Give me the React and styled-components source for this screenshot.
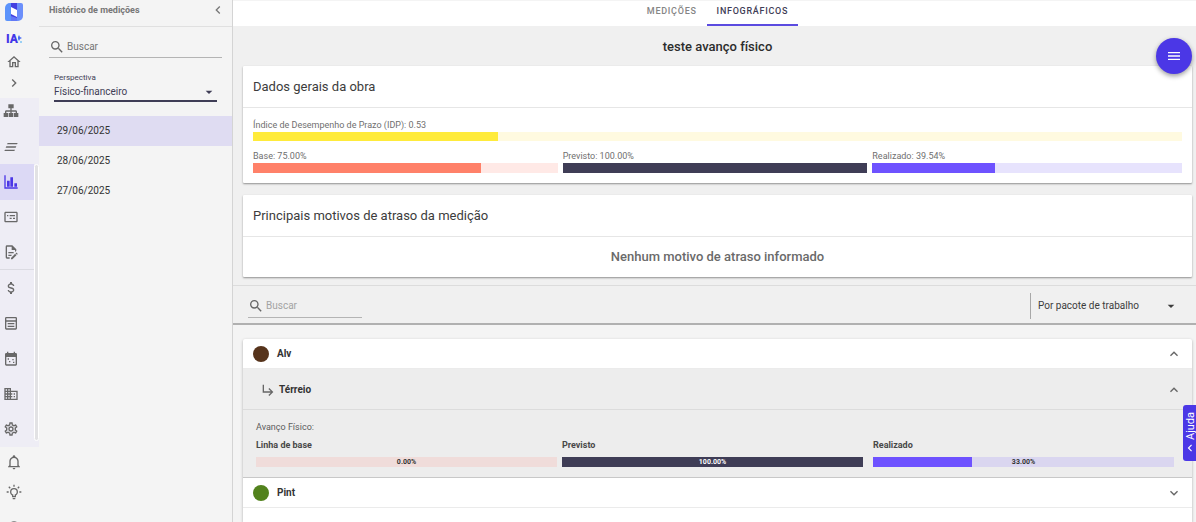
import { useState } from "react";
import styled, { createGlobalStyle, css } from "styled-components";

const GlobalStyle = createGlobalStyle`
  * {
    box-sizing: border-box;
  }
  body {
    margin: 0;
    font-family: Roboto, "Liberation Sans", sans-serif;
    color: #333;
    background: #f4f4f4;
    overflow: hidden;
  }
  button, input, select {
    font-family: inherit;
    color: inherit;
    border: 0;
    border-radius: 0;
    background: none;
    padding: 0;
    margin: 0;
    outline: none;
  }
  button, select {
    cursor: pointer;
  }
  a {
    color: inherit;
    text-decoration: none;
  }
  h1, h2, p {
    margin: 0;
  }
`;

const icons = {
  home: "M12 5.69L17 10.19V18H15V12H9V18H7V10.19L12 5.69M12 3L2 12H5V20H11V14H13V20H19V12H22",
  right: "M8.59,16.58L13.17,12L8.59,7.41L10,6L16,12L10,18L8.59,16.58Z",
  left: "M15.41,16.58L10.83,12L15.41,7.41L14,6L8,12L14,18L15.41,16.58Z",
  up: "M7.41,15.41L12,10.83L16.59,15.41L18,14L12,8L6,14L7.41,15.41Z",
  down: "M7.41,8.58L12,13.17L16.59,8.58L18,10L12,16L6,10L7.41,8.58Z",
  menuDown: "M7,10L12,15L17,10H7Z",
  search:
    "M9.5,3A6.5,6.5 0 0,1 16,9.5C16,11.11 15.41,12.59 14.44,13.73L14.71,14H15.5L20.5,19L19,20.5L14,15.5V14.71L13.73,14.44C12.59,15.41 11.11,16 9.5,16A6.5,6.5 0 0,1 3,9.5A6.5,6.5 0 0,1 9.5,3M9.5,5C7,5 5,7 5,9.5C5,12 7,14 9.5,14C12,14 14,12 14,9.5C14,7 12,5 9.5,5Z",
  menu: "M3,6H21V8H3V6M3,11H21V13H3V11M3,16H21V18H3V16Z",
  sitemap:
    "M8,2V8H11V11H5C3.89,11 3,11.89 3,13V15H1V21H8V15H5V13H11V15H9V21H15V15H13V13H19V15H16V21H23V15H21V13C21,11.89 20.11,11 19,11H13V8H16V2H8Z",
  lines: "M7,6H22L21,8H6L7,6M5,11H20L19,13H4L5,11M3,16H18L17,18H2L3,16Z",
  chart: "M2,2H4V20H22V22H2V2M6,10H10V19H6V10M11,5H15V19H11V5M17,14H21V19H17V14Z",
  card: "M20,4H4C2.89,4 2,4.89 2,6V18C2,19.11 2.89,20 4,20H20C21.11,20 22,19.11 22,18V6C22,4.89 21.11,4 20,4M20,18H4V6H20V18M6,9H8V11H6V9M10,9H18V11H10V9M10,13H13V15H10V13M15,13H18V15H15V13Z",
  fileEdit:
    "M8,12H16V14H8V12M10,20H6V4H13V9H18V12.1L20,10.1V8L14,2H6A2,2 0 0,0 4,4V20A2,2 0 0,0 6,22H10V20M8,18H12.1L13,17.1V16H8V18M20.2,13C20.3,13 20.5,13.1 20.6,13.2L21.9,14.5C22.1,14.7 22.1,15.1 21.9,15.3L20.9,16.3L18.8,14.2L19.8,13.2C19.9,13.1 20,13 20.2,13M20.2,16.9L14.1,23H12V20.9L18.1,14.8L20.2,16.9Z",
  dollar:
    "M7,15H9C9,16.08 10.37,17 12,17C13.63,17 15,16.08 15,15C15,13.9 13.96,13.5 11.76,12.97C9.64,12.44 7,11.78 7,9C7,7.21 8.47,5.69 10.5,5.18V3H13.5V5.18C15.53,5.69 17,7.21 17,9H15C15,7.92 13.63,7 12,7C10.37,7 9,7.92 9,9C9,10.1 10.04,10.5 12.24,11.03C14.36,11.56 17,12.22 17,15C17,16.79 15.53,18.31 13.5,18.82V21H10.5V18.82C8.47,18.31 7,16.79 7,15Z",
  form: "M5,3H19A2,2 0 0,1 21,5V20A2,2 0 0,1 19,22H5A2,2 0 0,1 3,20V5A2,2 0 0,1 5,3M5,5V8H19V5H5M5,10V20H19V10H5M7,12H17V14H7V12M7,16H17V18H7V16Z",
  calendar:
    "M6,1H8V3H16V1H18V3H19A2,2 0 0,1 21,5V20A2,2 0 0,1 19,22H5A2,2 0 0,1 3,20V5A2,2 0 0,1 5,3H6V1M5,9V20H19V9H5M7,11H9V13H7V11M14,12H16V14H14V12M9,15H11V17H9V15M15,16H17V18H15V16Z",
  building:
    "M18,15H16V17H18M18,11H16V13H18M20,19H12V17H14V15H12V13H14V11H12V9H20M10,7H8V5H10M10,11H8V9H10M10,15H8V13H10M10,19H8V17H10M6,7H4V5H6M6,11H4V9H6M6,15H4V13H6M6,19H4V17H6M12,7V3H2V21H22V7H12Z",
  cog: "M12,8A4,4 0 0,1 16,12A4,4 0 0,1 12,16A4,4 0 0,1 8,12A4,4 0 0,1 12,8M12,10A2,2 0 0,0 10,12A2,2 0 0,0 12,14A2,2 0 0,0 14,12A2,2 0 0,0 12,10M10,22C9.75,22 9.54,21.82 9.5,21.58L9.13,18.93C8.5,18.68 7.96,18.34 7.44,17.94L4.95,18.95C4.73,19.03 4.46,18.95 4.34,18.73L2.34,15.27C2.21,15.05 2.27,14.78 2.46,14.63L4.57,12.97L4.5,12L4.57,11L2.46,9.37C2.27,9.22 2.21,8.95 2.34,8.73L4.34,5.27C4.46,5.05 4.73,4.96 4.95,5.05L7.44,6.05C7.96,5.66 8.5,5.32 9.13,5.07L9.5,2.42C9.54,2.18 9.75,2 10,2H14C14.25,2 14.46,2.18 14.5,2.42L14.87,5.07C15.5,5.32 16.04,5.66 16.56,6.05L19.05,5.05C19.27,4.96 19.54,5.05 19.66,5.27L21.66,8.73C21.79,8.95 21.73,9.22 21.54,9.37L19.43,11L19.5,12L19.43,13L21.54,14.63C21.73,14.78 21.79,15.05 21.66,15.27L19.66,18.73C19.54,18.95 19.27,19.04 19.05,18.95L16.56,17.95C16.04,18.34 15.5,18.68 14.87,18.93L14.5,21.58C14.46,21.82 14.25,22 14,22H10M11.25,4L10.88,6.61C9.68,6.86 8.62,7.5 7.85,8.39L5.44,7.35L4.69,8.65L6.8,10.2C6.4,11.37 6.4,12.64 6.8,13.8L4.68,15.36L5.43,16.66L7.86,15.62C8.63,16.5 9.68,17.14 10.87,17.38L11.24,20H12.76L13.13,17.39C14.32,17.14 15.37,16.5 16.14,15.62L18.57,16.66L19.32,15.36L17.2,13.81C17.6,12.64 17.6,11.37 17.2,10.2L19.31,8.65L18.56,7.35L16.15,8.39C15.38,7.5 14.32,6.86 13.12,6.62L12.75,4H11.25Z",
  bell: "M10 21H14C14 22.1 13.1 23 12 23S10 22.1 10 21M21 19V20H3V19L5 17V11C5 7.9 7 5.2 10 4.3V4C10 2.9 10.9 2 12 2S14 2.9 14 4V4.3C17 5.2 19 7.9 19 11V17L21 19M17 11C17 8.2 14.8 6 12 6S7 8.2 7 11V18H17V11Z",
  bulb: "M20,11H23V13H20V11M1,11H4V13H1V11M13,1V4H11V1H13M4.92,3.5L7.05,5.64L5.63,7.05L3.5,4.93L4.92,3.5M16.95,5.63L19.07,3.5L20.5,4.93L18.37,7.05L16.95,5.63M12,6A6,6 0 0,1 18,12C18,14.22 16.79,16.16 15,17.2V19A1,1 0 0,1 14,20H10A1,1 0 0,1 9,19V17.2C7.21,16.16 6,14.22 6,12A6,6 0 0,1 12,6M14,21V22A1,1 0 0,1 13,23H11A1,1 0 0,1 10,22V21H14M11,18H13V15.87C14.73,15.43 16,13.86 16,12A4,4 0 0,0 12,8A4,4 0 0,0 8,12C8,13.86 9.27,15.43 11,15.87V18Z",
  help: "M12,2A10,10 0 0,0 2,12A10,10 0 0,0 12,22A10,10 0 0,0 22,12A10,10 0 0,0 12,2M12,20A8,8 0 0,1 4,12A8,8 0 0,1 12,4A8,8 0 0,1 20,12A8,8 0 0,1 12,20M11,16H13V18H11V16Z",
  subArrow:
    "M20,15L14,21L12.58,19.58L16.17,16H4V4H6V14H16.17L12.58,10.42L14,9L20,15Z",
};

const Svg = styled.svg`
  display: block;
  flex-shrink: 0;
  fill: currentColor;
`;

function Icon({ name, size = 16 }) {
  return (
    <Svg width={size} height={size} viewBox="0 0 24 24" aria-hidden="true">
      <path d={icons[name]} />
    </Svg>
  );
}

const Root = styled.div`
  display: flex;
  height: 100vh;
  overflow: hidden;
`;

/* ---------- side rail ---------- */

const Rail = styled.nav`
  width: 39px;
  flex-shrink: 0;
  display: flex;
  flex-direction: column;
  background: #f4f4f4;
  color: #686868;
`;

const RailTop = styled.div`
  height: 98px;
  width: 28px;
  flex-shrink: 0;
  display: flex;
  flex-direction: column;
  align-items: center;
`;

const RailLink = styled.a`
  display: flex;
  align-items: center;
  justify-content: center;
  height: ${({ $height }) => $height}px;
`;

const RailScroll = styled.div`
  display: flex;
  height: 349px;
  flex-shrink: 0;
  background: #eeedf5;
`;

const RailList = styled.div`
  flex: 1;
  display: grid;
  grid-template-rows: 31px repeat(9, 1fr);
`;

const RailItem = styled.a`
  display: flex;
  align-items: center;
  padding-left: 3px;
  &:first-child {
    padding-bottom: 6px;
  }
  ${({ $active }) =>
    $active &&
    css`
      background: #dcd9f5;
      color: #4b37e6;
    `}
  ${({ $divider }) =>
    $divider &&
    css`
      border-bottom: 1px solid #dbdbe2;
    `}
`;

const ScrollThumb = styled.div`
  width: 5px;
  margin: 66px 0 6px;
  border: 1px solid #fff;
  border-radius: 3px;
  background: #e2e2e4;
`;

const RailBottom = styled.div`
  width: 28px;
`;

const railItems = [
  { icon: "sitemap", label: "Estrutura" },
  { icon: "lines", label: "Cronograma" },
  { icon: "chart", label: "Medições", active: true },
  { icon: "card", label: "Cartões" },
  { icon: "fileEdit", label: "Diário", divider: true },
  { icon: "dollar", label: "Financeiro" },
  { icon: "form", label: "Formulários" },
  { icon: "calendar", label: "Calendário" },
  { icon: "building", label: "Empresa" },
  { icon: "cog", label: "Configurações" },
];

function Logo() {
  return (
    <svg width="20" height="20" viewBox="0 0 20 20" aria-hidden="true">
      <path d="M1 6a5 5 0 0 1 5-5h2v18H3a2 2 0 0 1-2-2z" fill="#5b93fb" />
      <path d="M12 1h5a2 2 0 0 1 2 2v11a5 5 0 0 1-5 5h-2z" fill="#6b8ffb" />
      <path d="M7 1h6v18H7z" fill="#4440e0" />
      <path d="M7 14l6 2v3H7z" fill="#6378f6" />
      <path d="M7 5l6 3v7l-6-3z" fill="#fff" />
    </svg>
  );
}

const IaMark = styled.span`
  font-size: 12px;
  line-height: 16px;
  font-weight: 900;
  color: #4337e8;
`;

function SideRail() {
  return (
    <Rail>
      <RailTop>
        <RailLink href="#" aria-label="Início" $height={24}>
          <Logo />
        </RailLink>
        <RailLink href="#" aria-label="IA" $height={32}>
          <IaMark>IA</IaMark>
          <svg width="4" height="10" viewBox="0 0 4 10" aria-hidden="true">
            <path d="M1 1l1 2 2 1-2 1-1 2-1-2V3z" fill="#4a6cf5" />
            <circle cx="3" cy="8" r="1" fill="#7cc4f5" />
          </svg>
        </RailLink>
        <RailLink href="#" aria-label="Painel" $height={14}>
          <Icon name="home" />
        </RailLink>
        <RailLink href="#" aria-label="Expandir" $height={30}>
          <Icon name="right" />
        </RailLink>
      </RailTop>
      <RailScroll>
        <RailList>
          {railItems.map(({ icon, label, active, divider }) => (
            <RailItem
              key={icon}
              href="#"
              aria-label={label}
              $active={active}
              $divider={divider}
            >
              <Icon name={icon} />
            </RailItem>
          ))}
        </RailList>
        <ScrollThumb />
      </RailScroll>
      <RailBottom>
        <RailLink href="#" aria-label="Notificações" $height={30}>
          <Icon name="bell" />
        </RailLink>
        <RailLink href="#" aria-label="Dicas" $height={30}>
          <Icon name="bulb" />
        </RailLink>
        <RailLink href="#" aria-label="Suporte" $height={42}>
          <Icon name="help" />
        </RailLink>
      </RailBottom>
    </Rail>
  );
}

/* ---------- history panel ---------- */

const Panel = styled.aside`
  width: 194px;
  flex-shrink: 0;
  border-right: 1px solid #d4d4d4;
`;

const PanelHeader = styled.div`
  display: flex;
  align-items: center;
  justify-content: space-between;
  height: 27px;
  padding: 0 6px 6px 10px;
  border-bottom: 1px solid #e0e0e0;
  color: #777;
`;

const PanelTitle = styled.h2`
  font-size: 9px;
  line-height: 12px;
  font-weight: 700;
`;

const SearchField = styled.label`
  display: flex;
  align-items: center;
  gap: 2px;
  height: 24px;
  padding-top: 2px;
  border-bottom: 1px solid #b4b4b4;
  color: #666;
`;

const SearchInput = styled.input`
  flex: 1;
  min-width: 0;
  font-size: 10px;
  line-height: 16px;
  &::placeholder {
    color: ${({ $muted }) => ($muted ? "#a3a3a3" : "#747474")};
    opacity: 1;
  }
`;

const PanelSearch = styled.div`
  padding: 7px 10px 0;
`;

const Perspective = styled.div`
  margin: 14px 15px 14px;
  border-bottom: 2px solid #3f3d56;
  color: #3f3d56;
`;

const PerspectiveLabel = styled.label`
  display: block;
  font-size: 8px;
  line-height: 12px;
`;

const SelectWrap = styled.div`
  display: flex;
  align-items: center;
`;

const Select = styled.select`
  appearance: none;
  flex: 1;
  min-width: 0;
  margin-right: -14px;
  padding-right: 14px;
  font-size: 10px;
  line-height: 16px;
`;

const SelectArrow = styled.span`
  display: flex;
  pointer-events: none;
`;

const DateButton = styled.button`
  display: block;
  width: 100%;
  height: 30px;
  padding-left: 18px;
  text-align: left;
  font-size: 10px;
  line-height: 16px;
  color: #333;
  background: ${({ $active }) => ($active ? "#dfdcf2" : "transparent")};
`;

const dates = ["29/06/2025", "28/06/2025", "27/06/2025"];

function HistoryPanel() {
  const [selected, setSelected] = useState(dates[0]);
  return (
    <Panel>
      <PanelHeader>
        <PanelTitle>Histórico de medições</PanelTitle>
        <button aria-label="Recolher">
          <Icon name="left" />
        </button>
      </PanelHeader>
      <PanelSearch>
        <SearchField>
          <Icon name="search" />
          <SearchInput placeholder="Buscar" aria-label="Buscar medição" />
        </SearchField>
      </PanelSearch>
      <Perspective>
        <PerspectiveLabel htmlFor="perspectiva">Perspectiva</PerspectiveLabel>
        <SelectWrap>
          <Select id="perspectiva">
            <option>Físico-financeiro</option>
          </Select>
          <SelectArrow>
            <Icon name="menuDown" />
          </SelectArrow>
        </SelectWrap>
      </Perspective>
      {dates.map((date) => (
        <DateButton
          key={date}
          $active={date === selected}
          onClick={() => setSelected(date)}
        >
          {date}
        </DateButton>
      ))}
    </Panel>
  );
}

/* ---------- main area ---------- */

const Main = styled.main`
  flex: 1;
  min-width: 0;
  display: flex;
  flex-direction: column;
`;

const Tabs = styled.div`
  display: flex;
  justify-content: center;
  flex-shrink: 0;
  height: 26px;
  padding-left: 6px;
  background: #fff;
  border-top: 1px solid #f4f4f4;
`;

const Tab = styled.button`
  padding: 0 10px 4px;
  font-size: 9px;
  line-height: 12px;
  font-weight: 500;
  letter-spacing: 0.08em;
  color: ${({ $active }) => ($active ? "#3f3d56" : "#858585")};
  border-bottom: 2px solid ${({ $active }) => ($active ? "#5b4be0" : "#fff")};
`;

const Overview = styled.section`
  flex-shrink: 0;
  padding: 0 4px 8px 10px;
  background: #f0f0f0;
`;

const Title = styled.h1`
  height: 40px;
  text-align: center;
  font-size: 13px;
  line-height: 41px;
  font-weight: 500;
  color: #2c2c2c;
`;

const Card = styled.article`
  background: #fff;
  border-radius: 1px;
  box-shadow: 0 1px 2px rgba(0, 0, 0, 0.4);
  & + & {
    margin-top: 12px;
  }
`;

const CardTitle = styled.h2`
  height: 42px;
  padding: 0 10px;
  border-bottom: 1px solid #e6e6e6;
  font-size: 13px;
  line-height: 41px;
  font-weight: 400;
  color: #3c3c3c;
`;

const CardBody = styled.div`
  padding: 11px 10px 10px;
`;

const Metrics = styled.div`
  display: grid;
  grid-template-columns: repeat(3, 1fr);
  padding-top: 9px;
`;

const Metric = styled.div`
  &:not(:last-child) {
    padding-right: 5px;
  }
`;

const MetricLabel = styled.p`
  font-size: 9px;
  line-height: 12px;
  padding-bottom: 1px;
  color: #6f6f6f;
`;

const Track = styled.div`
  display: grid;
  height: ${({ $height }) => $height || 10}px;
  background: ${({ $track }) => $track};
`;

const Fill = styled.div`
  grid-area: 1 / 1;
  background: ${({ $color }) => $color};
`;

const TrackText = styled.span`
  grid-area: 1 / 1;
  text-align: center;
  font-size: 7px;
  line-height: 10px;
  font-weight: 700;
  color: ${({ $light }) => ($light ? "#fff" : "#333")};
`;

function Bar({ value, color, track, height, text }) {
  return (
    <Track
      $track={track}
      $height={height}
      role="progressbar"
      aria-valuenow={value}
    >
      <Fill $color={color} style={{ width: `${value}%` }} />
      {text && <TrackText $light={value === 100}>{text}</TrackText>}
    </Track>
  );
}

const EmptyText = styled.p`
  text-align: center;
  font-size: 13px;
  line-height: 40px;
  font-weight: 500;
  color: #6a6a6a;
`;

const Toolbar = styled.div`
  display: flex;
  align-items: center;
  justify-content: space-between;
  flex-shrink: 0;
  height: 40px;
  padding: 2px 17px 0 15px;
  background: #f0f0f0;
  border-top: 1px solid #dcdcdc;
  border-bottom: 2px solid #b0b0b0;
`;

const ToolbarSearch = styled.div`
  width: 114px;
`;

const GroupSelect = styled(SelectWrap)`
  width: 149px;
  height: 26px;
  padding-left: 7px;
  border-left: 1px solid #a8a8a8;
  color: #3c3c3c;
`;

const Groups = styled.section`
  flex: 1;
  padding: 14px 4px 0 10px;
`;

const Accordion = styled.div`
  height: 100%;
  background: #fff;
  border-radius: 2px 2px 0 0;
  box-shadow: 0 1px 3px rgba(0, 0, 0, 0.3);
`;

const GroupHeader = styled.button`
  display: flex;
  align-items: center;
  width: 100%;
  height: 30px;
  padding: 0 10px;
  gap: 8px;
  border-bottom: 1px solid #ebebeb;
  color: #666;
`;

const Dot = styled.span`
  width: 16px;
  height: 16px;
  border-radius: 50%;
  background: ${({ $color }) => $color};
`;

const GroupName = styled.span`
  flex: 1;
  text-align: left;
  font-size: 10px;
  line-height: 14px;
  font-weight: 700;
  color: #333;
`;

const SubHeader = styled(GroupHeader)`
  height: 41px;
  padding: 2px 10px 0 17px;
  gap: 3px;
  background: #ededed;
  border-bottom: 1px solid #dcdcdc;
`;

const Details = styled.div`
  padding: 11px 18px 10px 13px;
  background: #ededed;
  border-bottom: 1px solid #c8c8c8;
`;

const DetailsCaption = styled.p`
  font-size: 9px;
  line-height: 12px;
  color: #5c5c5c;
`;

const Stages = styled.div`
  display: flex;
  padding-top: 6px;
`;

const Stage = styled.div`
  flex: 1;
  margin-right: ${({ $gap }) => $gap}px;
`;

const StageName = styled.p`
  padding-bottom: 6px;
  font-size: 9px;
  line-height: 12px;
  font-weight: 700;
  color: #484848;
`;

const Fab = styled.button`
  position: absolute;
  top: 38px;
  right: 4px;
  display: flex;
  align-items: center;
  justify-content: center;
  width: 36px;
  height: 36px;
  border-radius: 50%;
  background: #4b37e6;
  color: #fff;
  box-shadow: 0 2px 5px rgba(0, 0, 0, 0.4);
`;

const HelpButton = styled.button`
  position: absolute;
  top: 405px;
  right: 0;
  display: flex;
  align-items: center;
  justify-content: center;
  gap: 1px;
  width: 13px;
  height: 56px;
  font-size: 11px;
  line-height: 11px;
  padding-right: 2px;
  writing-mode: vertical-rl;
  transform: rotate(180deg);
  border-radius: 0 3px 3px 0;
  background: #4b37e6;
  color: #fff;
  svg {
    transform: rotate(180deg);
  }
`;

const metrics = [
  { label: "Base: 75.00%", value: 75, color: "#ff8169", track: "#ffe9e6" },
  { label: "Previsto: 100.00%", value: 100, color: "#3f3d56", track: "#d9d8dd" },
  { label: "Realizado: 39.54%", value: 39.54, color: "#6e52ff", track: "#e7e3fd" },
];

const stages = [
  { name: "Linha de base", value: 0, text: "0.00%", color: "#ff8169", track: "#f0dcda", gap: 5 },
  { name: "Previsto", value: 100, text: "100.00%", color: "#3f3d56", track: "#d9d8dd", gap: 10 },
  { name: "Realizado", value: 33, text: "33.00%", color: "#6e52ff", track: "#dad6f0", gap: 0 },
];

function App() {
  const [tab, setTab] = useState("Infográficos");

  return (
    <Root>
      <GlobalStyle />
      <SideRail />
      <HistoryPanel />
      <Main>
        <Tabs role="tablist">
          {["Medições", "Infográficos"].map((name) => (
            <Tab
              key={name}
              role="tab"
              aria-selected={tab === name}
              $active={tab === name}
              onClick={() => setTab(name)}
            >
              {name.toUpperCase()}
            </Tab>
          ))}
        </Tabs>
        <Overview>
          <Title>teste avanço físico</Title>
          <Card>
            <CardTitle>Dados gerais da obra</CardTitle>
            <CardBody>
              <MetricLabel>Índice de Desempenho de Prazo (IDP): 0.53</MetricLabel>
              <Bar value={26.4} color="#ffeb3b" track="#fffae0" height={9} />
              <Metrics>
                {metrics.map(({ label, ...bar }) => (
                  <Metric key={label}>
                    <MetricLabel>{label}</MetricLabel>
                    <Bar {...bar} />
                  </Metric>
                ))}
              </Metrics>
            </CardBody>
          </Card>
          <Card>
            <CardTitle>Principais motivos de atraso da medição</CardTitle>
            <EmptyText>Nenhum motivo de atraso informado</EmptyText>
          </Card>
        </Overview>
        <Toolbar>
          <ToolbarSearch>
            <SearchField>
              <Icon name="search" />
              <SearchInput $muted placeholder="Buscar" aria-label="Buscar pacote" />
            </SearchField>
          </ToolbarSearch>
          <GroupSelect>
            <Select aria-label="Agrupamento">
              <option>Por pacote de trabalho</option>
            </Select>
            <SelectArrow>
              <Icon name="menuDown" />
            </SelectArrow>
          </GroupSelect>
        </Toolbar>
        <Groups>
          <Accordion>
            <GroupHeader aria-expanded="true">
              <Dot $color="#56331b" />
              <GroupName>Alv</GroupName>
              <Icon name="up" />
            </GroupHeader>
            <SubHeader aria-expanded="true">
              <Icon name="subArrow" />
              <GroupName>Térreio</GroupName>
              <Icon name="up" />
            </SubHeader>
            <Details>
              <DetailsCaption>Avanço Físico:</DetailsCaption>
              <Stages>
                {stages.map(({ name, gap, ...bar }) => (
                  <Stage key={name} $gap={gap}>
                    <StageName>{name}</StageName>
                    <Bar {...bar} />
                  </Stage>
                ))}
              </Stages>
            </Details>
            <GroupHeader aria-expanded="false">
              <Dot $color="#52821d" />
              <GroupName>Pint</GroupName>
              <Icon name="down" />
            </GroupHeader>
          </Accordion>
        </Groups>
      </Main>
      <Fab aria-label="Menu">
        <Icon name="menu" />
      </Fab>
      <HelpButton>
        <Icon name="left" size={14} />
        Ajuda
      </HelpButton>
    </Root>
  );
}

export default App;
